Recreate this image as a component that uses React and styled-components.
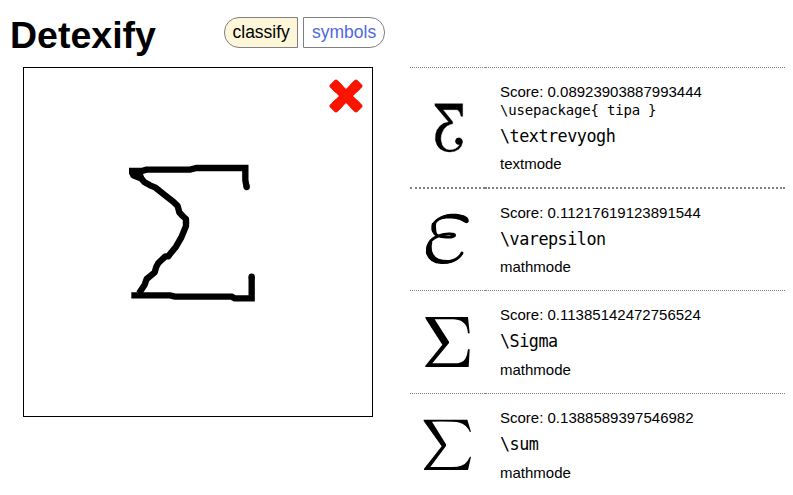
import React from "react";
import styled, { createGlobalStyle } from "styled-components";

const GlobalStyle = createGlobalStyle`
  *, *::before, *::after { box-sizing: border-box; }
  body {
    margin: 0;
    background: #fff;
    color: #000;
    font-family: "Liberation Sans", Arial, sans-serif;
    overflow: hidden;
  }
`;

const Page = styled.div`
  width: 793px;
  height: 495px;
  overflow: hidden;
`;

const Header = styled.header`
  display: flex;
  align-items: flex-start;
  height: 67px;
  padding-left: 10px;
`;

const Title = styled.h1`
  width: 214px;
  margin: 13px 0 0;
  font-size: 37.5px;
  line-height: 44px;
  font-weight: bold;
`;

const Tabs = styled.nav`
  display: flex;
  gap: 5px;
  margin-top: 17px;
`;

const Tab = styled.a`
  width: ${(p) => (p.$active ? 74 : 82)}px;
  height: 31px;
  padding-left: ${(p) => (p.$active ? 7.5 : 8)}px;
  border: 1px solid #808080;
  border-radius: ${(p) => (p.$active ? "15px 0 0 15px" : "0 15px 15px 0")};
  background: ${(p) => (p.$active ? "#fdf6d8" : "#fff")};
  color: ${(p) => (p.$active ? "#000" : "#4f68e0")};
  font-size: 17.5px;
  line-height: 29px;
  white-space: nowrap;
`;

const Main = styled.main`
  display: flex;
  align-items: flex-start;
  gap: 37px;
  padding-left: 23px;
`;

const Canvas = styled.div`
  position: relative;
  flex: none;
  width: 350px;
  height: 350px;
  border: 1px solid #000;
`;

const Drawing = styled.svg`
  display: block;
  width: 348px;
  height: 348px;
  fill: none;
  stroke: #000;
  stroke-width: 19;
  stroke-linejoin: round;
`;

const ClearButton = styled.button`
  position: absolute;
  top: 11px;
  right: 9px;
  width: 34px;
  height: 34px;
  padding: 0;
  border: 0;
  background: none;
  svg { display: block; }
`;

const Results = styled.ul`
  width: 375px;
  margin: 0;
  padding: 0;
  list-style: none;
`;

const Row = styled.li`
  display: grid;
  grid-template-columns: 75px 300px;
  height: ${(p) => p.$height}px;
`;

const Cell = styled.div`
  border-top: ${(p) => (p.$thick ? 2 : 1)}px dotted #808080;
`;

const SymbolCell = styled(Cell)`
  padding-top: ${(p) => p.$pad}px;
`;

const Glyph = styled.svg`
  display: block;
  width: 75px;
  height: 60px;
  stroke-linecap: round;
  stroke-linejoin: round;
`;

const InfoCell = styled(Cell)`
  padding: 15px 0 0 15px;
  font-size: 15px;
  line-height: 18px;
  white-space: nowrap;
`;

const Package = styled.code`
  display: block;
  font-family: "DejaVu Sans Mono", monospace;
  font-size: 14px;
  letter-spacing: -0.2px;
  line-height: 18px;
`;

const Command = styled.code`
  display: block;
  height: ${(p) => p.$height}px;
  font-family: "DejaVu Sans Mono", monospace;
  font-size: 16.8px;
  letter-spacing: -0.5px;
  line-height: 35px;
`;

const Revyogh = () => (
  <Glyph viewBox="30 114 225 180">
    <path
      d="M105 131H188V169H183Q180 153 172 149H129L158 185V191Q139 195 131 208Q120 226 123 242Q127 268 148 270Q170 270 179 254Q166 254 166 243Q167 233 177 233Q187 234 188 246Q183 275 149 276Q112 274 106 239Q104 205 131 190L146 186L105 137Z"
      stroke="#000"
      strokeWidth="1"
    />
  </Glyph>
);

const Varepsilon = () => (
  <Glyph viewBox="30 87 225 180">
    <path
      d="M201 124C192 107 162 103 138 109C103 116 94 139 100 154C106 169 130 173 152 171C168 169 167 162 153 162C130 160 99 170 88 189C76 209 83 233 107 242C137 252 174 243 186 219"
      fill="none"
      stroke="#000"
      strokeWidth="8.5"
    />
    <path d="M110 121C126 99 167 98 191 106C204 111 209 120 205 127Q199 132 192 127C177 113 137 112 110 121Z" />
    <path d="M96 129Q91 147 105 162L112 164Q106 147 109 127ZM90 186Q76 200 78 219Q86 250 124 252Q158 253 176 236Q141 244 116 236Q89 224 97 186Z" />
  </Glyph>
);

const Sigma = () => (
  <Glyph viewBox="30 78 225 180">
    <path d="M76 96H204L209 145H204Q202 118 185 109Q177 104 159 103H104L147 170V174L97 235H161Q188 235 196 221Q202 211 204 193H209L206 246H76V242L127 179L77 101Z" />
  </Glyph>
);

const Sum = () => (
  <Glyph viewBox="30 87 225 180">
    <path d="M71 104H202L213 140H209Q200 119 179 113Q162 109 96 110L138 178V183L91 246H153Q190 247 203 227L210 215H213L204 255H72V251L125 184L71 108Z" />
  </Glyph>
);

const results = [
  { score: "0.08923903887993444", pkg: "tipa", command: "\\textrevyogh", mode: "textmode", Symbol: Revyogh, height: 120, pad: 30, commandHeight: 36 },
  { score: "0.11217619123891544", command: "\\varepsilon", mode: "mathmode", Symbol: Varepsilon, height: 103, pad: 20, commandHeight: 36, thick: true },
  { score: "0.11385142472756524", command: "\\Sigma", mode: "mathmode", Symbol: Sigma, height: 103, pad: 20, commandHeight: 37 },
  { score: "0.1388589397546982", command: "\\sum", mode: "mathmode", Symbol: Sum, height: 103, pad: 20, commandHeight: 37 },
];

export default function App() {
  return (
    <Page>
      <GlobalStyle />
      <Header>
        <Title>Detexify</Title>
        <Tabs>
          <Tab $active>classify</Tab>
          <Tab>symbols</Tab>
        </Tabs>
      </Header>
      <Main>
        <Canvas>
          <Drawing viewBox="-258 -246 1044 1044">
            <path d="M57 63H95L109 59H240L260 54H406V91L410 111" strokeLinejoin="miter" />
            <path d="M66 66L70 76L94 86L104 97L120 106L135 112L164 135L190 155L203 168L208 187L218 198L228 207V228L214 262L198 290L180 312L175 319H166L145 339L139 350L134 367L110 387L104 404L87 430" />
            <path d="M66 62L94 70L100 86L70 78Z" fill="#000" strokeWidth="8" />
            <path d="M64 436H180L195 440H365L374 445H425V380" strokeLinejoin="miter" />
            <path d="M410 110V111M425 381V380M228 217V218" strokeLinecap="round" />
          </Drawing>
          <ClearButton aria-label="Clear">
            <svg width="34" height="34" viewBox="0 0 34 34">
              <path
                d="M6.5 6.5L27.5 27.5M27.5 6.5L6.5 27.5"
                stroke="#f91400"
                strokeWidth="10"
                fill="none"
              />
              <path
                d="M7 2.8L2.8 7L7 11.2L11.2 7ZM27 2.8L31.2 7L27 11.2L22.8 7ZM7 31.2L2.8 27L7 22.8L11.2 27ZM27 31.2L31.2 27L27 22.8L22.8 27Z"
                fill="#f91400"
                stroke="#f91400"
                strokeWidth="4.5"
                strokeLinejoin="round"
              />
            </svg>
          </ClearButton>
        </Canvas>
        <Results>
          {results.map(({ score, pkg, command, mode, Symbol, height, pad, commandHeight, thick }) => (
            <Row key={command} $height={height}>
              <SymbolCell $thick={thick} $pad={pad}>
                <Symbol />
              </SymbolCell>
              <InfoCell $thick={thick}>
                <div>Score: {score}</div>
                {pkg && <Package>{`\\usepackage{ ${pkg} }`}</Package>}
                <Command $height={commandHeight}>{command}</Command>
                <div>{mode}</div>
              </InfoCell>
            </Row>
          ))}
        </Results>
      </Main>
    </Page>
  );
}
